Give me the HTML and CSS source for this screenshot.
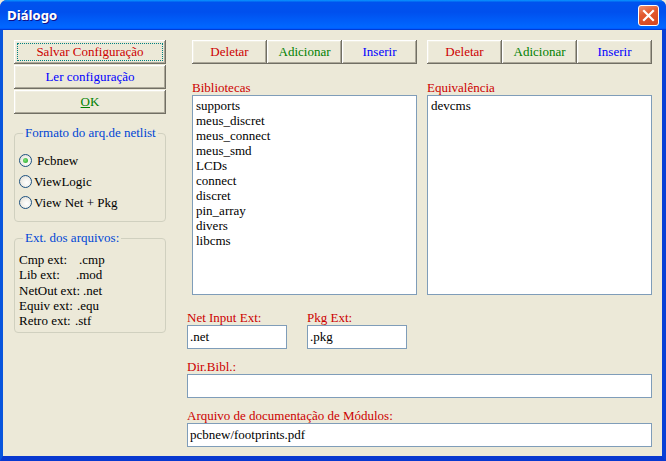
FILE: index.html
```html
<!DOCTYPE html>
<html>
<head>
<meta charset="utf-8">
<link rel="stylesheet" href="styles.css">
</head>
<body>
<div class="window">
  <div class="titlebar">
    <span class="title">Diálogo</span>
    <span class="close"><svg width="13" height="13" viewBox="0 0 13 13"><path d="M2 2 L11 11 M11 2 L2 11" stroke="#fff" stroke-width="2.2" stroke-linecap="square"/></svg></span>
  </div>
  <div class="frame">
    <div class="left">
      <div class="btn red focus"><span class="focusbox">Salvar Configuração</span></div>
      <div class="btn blue">Ler configuração</div>
      <div class="btn green"><span><u>O</u>K</span></div>
      <fieldset class="group g1">
        <legend>Formato do arq.de netlist</legend>
        <div class="radio-row sel"><span class="radio on"></span><span class="rlabel">Pcbnew</span></div>
        <div class="radio-row"><span class="radio"></span><span class="rlabel">ViewLogic</span></div>
        <div class="radio-row"><span class="radio"></span><span class="rlabel">View Net + Pkg</span></div>
      </fieldset>
      <fieldset class="group g2">
        <legend>Ext. dos arquivos:</legend>
        <div class="ext"><span class="k w1">Cmp ext:</span>.cmp</div>
        <div class="ext"><span class="k w2">Lib ext:</span>.mod</div>
        <div class="ext"><span class="k w3">NetOut ext:</span>.net</div>
        <div class="ext"><span class="k w4">Equiv ext:</span>.equ</div>
        <div class="ext"><span class="k w5">Retro ext:</span>.stf</div>
      </fieldset>
    </div>
    <div class="right">
      <div class="lists">
        <div class="col">
          <div class="btnrow">
            <div class="btn red">Deletar</div>
            <div class="btn green">Adicionar</div>
            <div class="btn blue">Inserir</div>
          </div>
          <div class="label">Bibliotecas</div>
          <div class="listbox">
            <div>supports</div>
            <div>meus_discret</div>
            <div>meus_connect</div>
            <div>meus_smd</div>
            <div>LCDs</div>
            <div>connect</div>
            <div>discret</div>
            <div>pin_array</div>
            <div>divers</div>
            <div>libcms</div>
          </div>
        </div>
        <div class="col">
          <div class="btnrow">
            <div class="btn red">Deletar</div>
            <div class="btn green">Adicionar</div>
            <div class="btn blue">Inserir</div>
          </div>
          <div class="label">Equivalência</div>
          <div class="listbox">
            <div>devcms</div>
          </div>
        </div>
      </div>
      <div class="smallfields">
        <div class="field">
          <div class="label">Net Input Ext:</div>
          <div class="input short">.net</div>
        </div>
        <div class="field">
          <div class="label">Pkg Ext:</div>
          <div class="input short">.pkg</div>
        </div>
      </div>
      <div class="label gap">Dir.Bibl.:</div>
      <div class="input"></div>
      <div class="label gap">Arquivo de documentação de Módulos:</div>
      <div class="input">pcbnew/footprints.pdf</div>
    </div>
  </div>
</div>
</body>
</html>
```

FILE: styles.css
```css
* { box-sizing: border-box; }
html, body { margin: 0; padding: 0; background: #ECE9D8; }
body { font-family: "Liberation Serif", "Times New Roman", serif; font-size: 13px; color: #000; }

.window { width: 666px; height: 461px; display: flex; flex-direction: column; background: #0831D9; border-radius: 7px 7px 0 0; overflow: hidden; }

.titlebar {
  height: 30px; flex: none;
  display: flex; align-items: center; justify-content: space-between;
  padding: 0 7px 0 7px;
  background: linear-gradient(180deg, #0997ff, #0053ee 8%, #0050ee 40%, #0066ff 88%, #0066ff 93%, #005bff 95%, #003dd7 96%, #003dd7);
}
.title { color: #fff; font-family: "Liberation Sans Narrow", "DejaVu Sans Condensed", "Liberation Sans", sans-serif; font-weight: bold; font-size: 13px; text-shadow: 1px 1px #0f1089; padding-top: 1px; }
.close {
  width: 21px; height: 21px; border: 1px solid #fff; border-radius: 3px;
  background: linear-gradient(160deg, #f0916e 0%, #e2592f 40%, #d6461e 100%);
  display: flex; align-items: center; justify-content: center;
  margin-top: 1px;
}

.frame {
  flex: 1; display: flex;
  background: #ECE9D8;
  border-left: 3px solid #0855DD;
  border-right: 4px solid #0840D6;
  border-bottom: 5px solid #0838D0;
  padding: 10px 10px 0 11px;
}

.left { width: 152px; flex: none; display: flex; flex-direction: column; }

.btn {
  height: 24px; display: flex; align-items: center; justify-content: center;
  background: #ECE9D8;
  box-shadow: inset -1px -1px #716F64, inset 1px 1px #fff, inset -2px -2px #ACA899, inset 2px 2px #F1EFE2;
  line-height: 14px;
}
.left .btn + .btn { margin-top: 1px; }
.btn.focus { padding: 3px; }
.focusbox { flex: 1; align-self: stretch; display: flex; align-items: center; justify-content: center; border: 1px dotted #008080; }
.red { color: #CC0000; }
.blue { color: #0000FF; }
.green { color: #008000; }

.group { margin: 0; border: 1px solid #D0D0BF; border-radius: 4px; min-width: 0; }
.group legend { color: #0046D5; padding: 0 2px; margin-left: 4px; line-height: 14px; }
.g1 { margin-top: 12px; padding: 10px 4px 8px 4px; }
.g2 { margin-top: 9px; padding: 7px 4px 4px 4px; }

.radio-row { height: 21px; display: flex; align-items: center; }
.radio {
  width: 13px; height: 13px; border-radius: 50%; border: 1px solid #1C5180; flex: none;
  background: radial-gradient(circle at 60% 60%, #fff 0%, #f4f3ee 40%, #dcd8cf 100%);
  display: flex; align-items: center; justify-content: center;
}
.radio.on::after { content: ""; width: 5px; height: 5px; border-radius: 50%; background: radial-gradient(circle at 40% 40%, #7de27a, #21A121); }
.rlabel { margin-left: 2px; }
.sel .rlabel { margin-left: 5px; }

.ext { line-height: 15.25px; white-space: nowrap; }
.k { display: inline-block; padding-right: 3px; }
.w1 { min-width: 60px; }
.w2 { min-width: 57px; }
.w3 { min-width: 63px; }
.w4 { min-width: 58px; }
.w5 { min-width: 56px; }

.right { width: 465px; flex: none; margin-left: 21px; display: flex; flex-direction: column; }
.lists { display: flex; gap: 10px; padding-left: 5px; }
.col { width: 225px; display: flex; flex-direction: column; }
.btnrow { display: flex; }
.btnrow .btn { flex: 1; }
.label { color: #CC0000; line-height: 14px; white-space: nowrap; }
.col .label { margin-top: 17px; }
.listbox { height: 200px; background: #fff; border: 1px solid #7F9DB9; padding: 2px 3px; line-height: 15px; }

.smallfields { display: flex; gap: 20px; margin-top: 16px; }
.field { display: flex; flex-direction: column; }
.label.gap { margin-top: 11px; }
.input { height: 24px; background: #fff; border: 1px solid #7F9DB9; padding: 0 2px; display: flex; align-items: center; line-height: 14px; }
.input.short { width: 100px; }
```
